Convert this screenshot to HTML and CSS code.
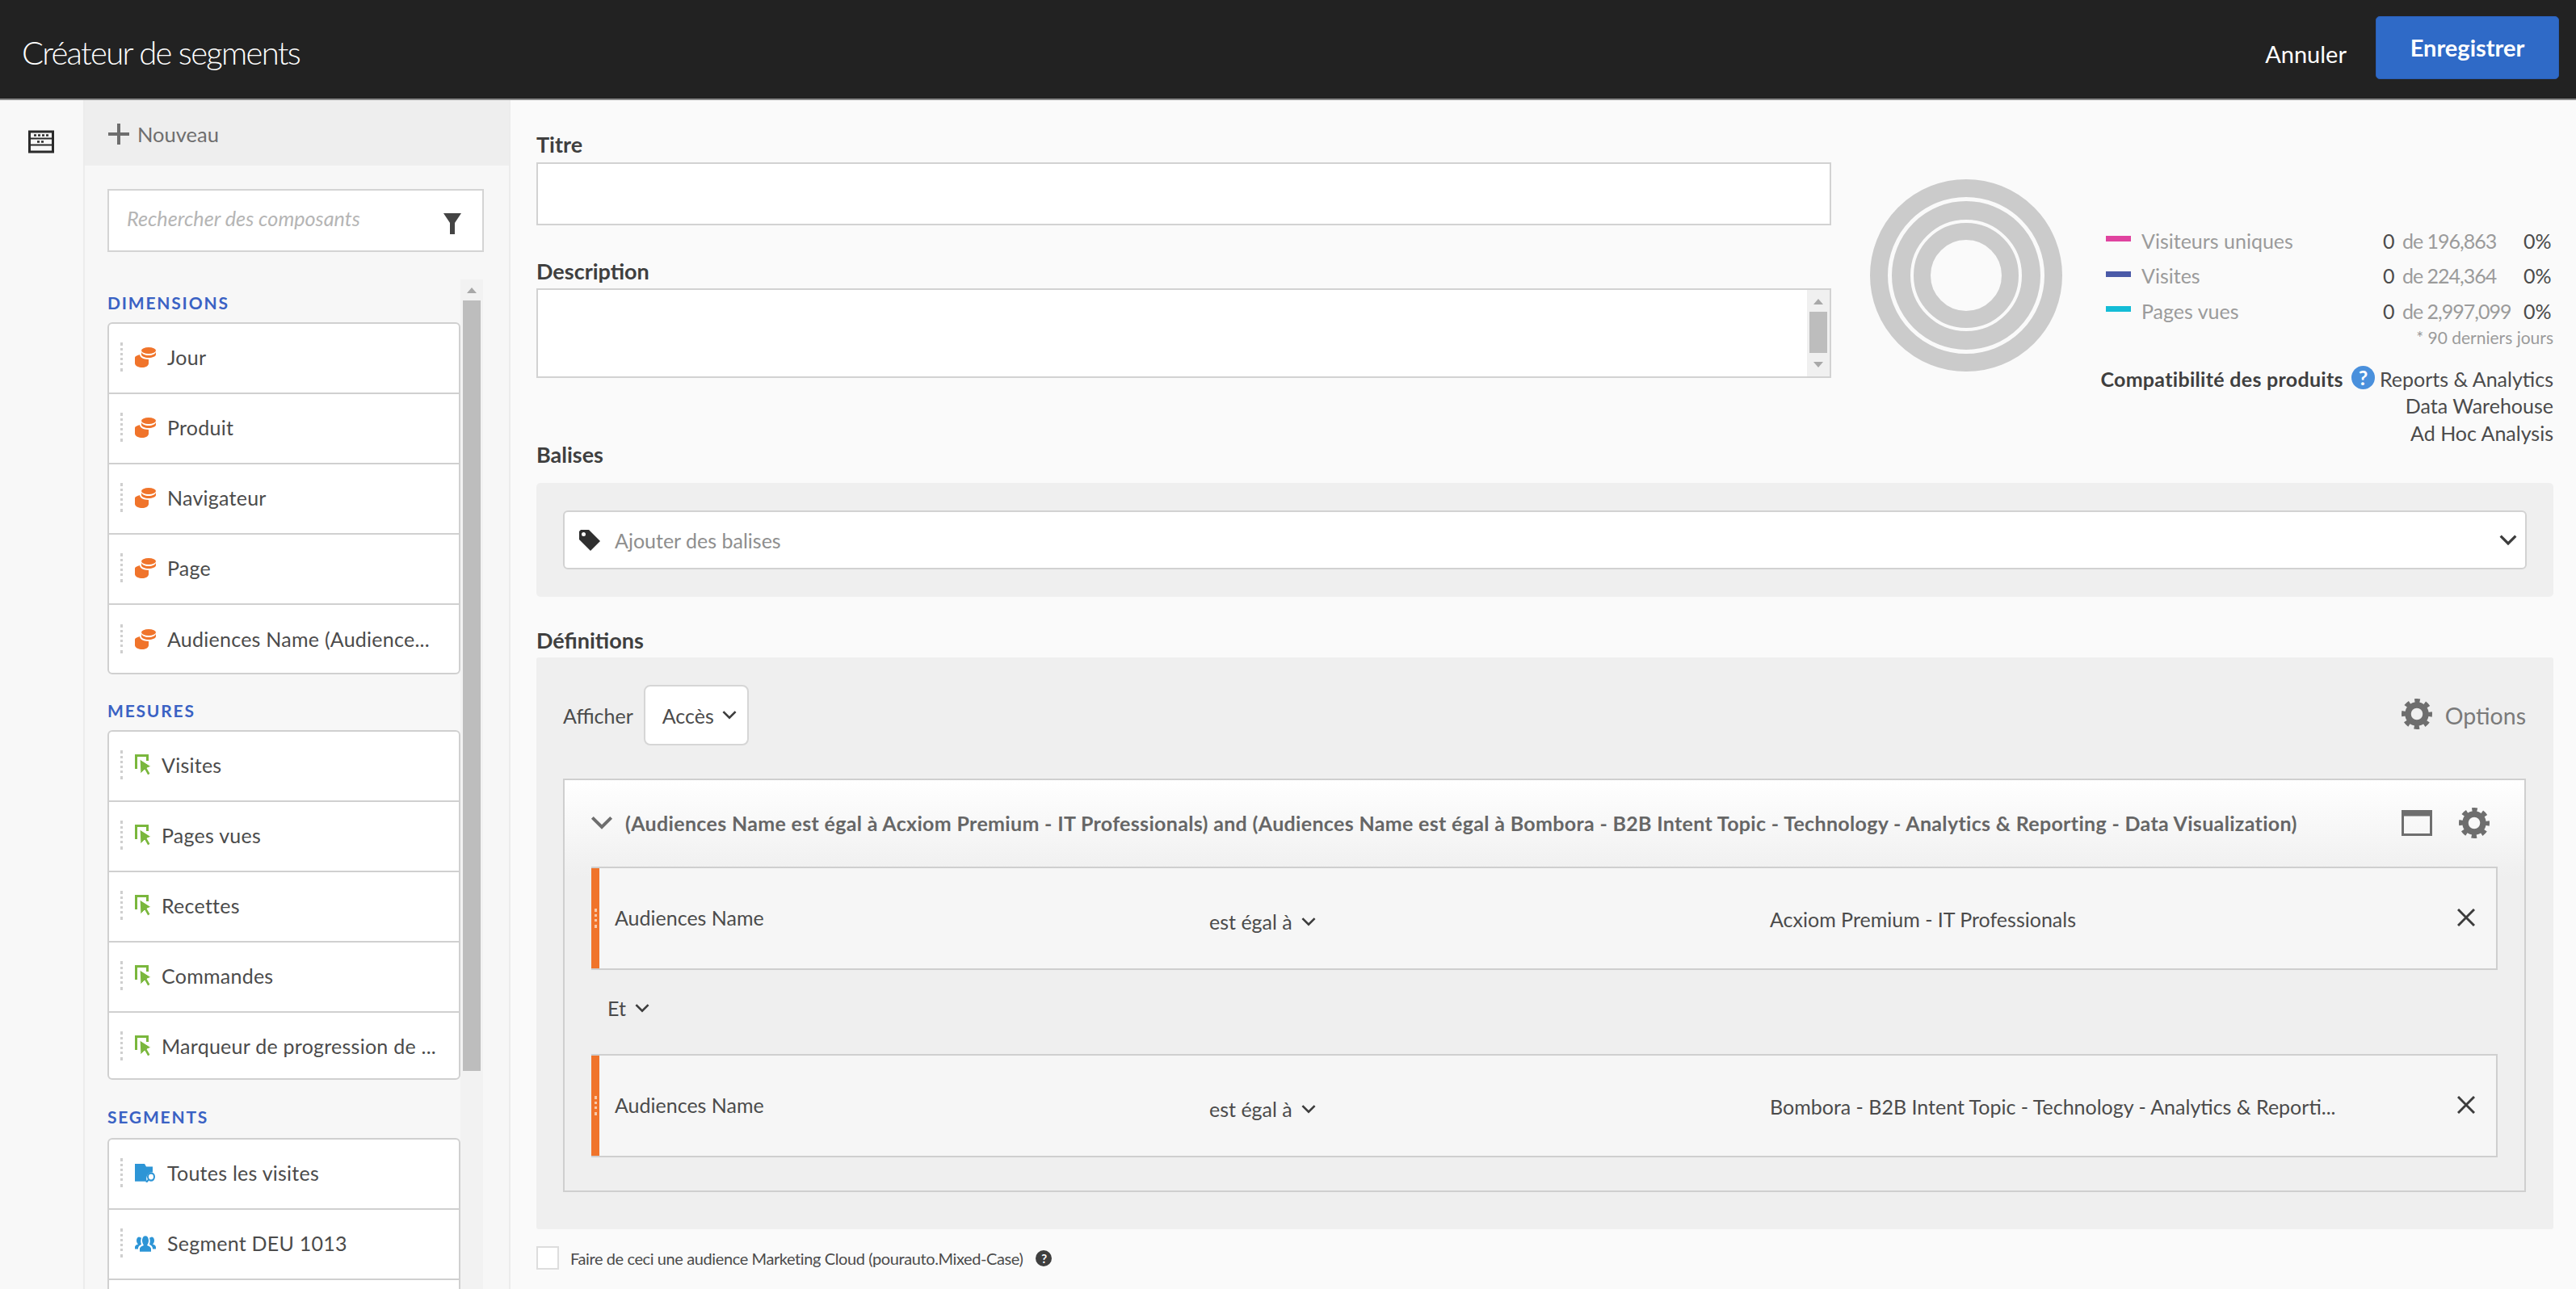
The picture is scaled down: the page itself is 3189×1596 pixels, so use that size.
FILE: index.html
```html
<!DOCTYPE html>
<html lang="fr">

<head>
    <meta charset="utf-8">
    <title>Créateur de segments</title>
    <link rel="stylesheet" href="styles.css">
</head>

<body>
    <svg class="defs" width="0" height="0">
        <symbol id="i-gear" viewBox="0 0 38 38">
            <circle cx="19" cy="19" r="11" fill="none" stroke="currentColor" stroke-width="7.500" />
            <circle cx="19" cy="19" r="16.500" fill="none" stroke="currentColor" stroke-width="5" stroke-dasharray="6.500 6.460" stroke-dashoffset="3.250" />
        </symbol>
        <symbol id="i-chevron" viewBox="0 0 18 12">
            <path d="M2 2l7 7 7-7" fill="none" stroke="currentColor" stroke-width="2.400" />
        </symbol>
        <symbol id="i-dim" viewBox="0 0 26 26">
            <ellipse cx="17" cy="5" rx="9" ry="4" fill="#f0742b" />
            <path d="M8 7v3c0 2 4 4 9 4s9-2 9-4V7c-1 2-4 4-9 4s-8-2-9-4z" fill="#f0742b" />
            <path d="M0 14c0-2 3-3 6-4 0 3 4 6 11 6v5c0 3-4 5-8 5s-9-2-9-5z" fill="#f0742b" />
        </symbol>
        <symbol id="i-metric" viewBox="0 0 20 26">
            <path d="M1.500 18V1.500h14V8" fill="none" stroke="#7ab73d" stroke-width="3" />
            <path d="M6 6l14 9-5 2 4 7-3 2-4-7-5 5z" fill="#7ab73d" stroke="#fff" stroke-width="1" />
        </symbol>
        <symbol id="i-folder" viewBox="0 0 26 20" preserveAspectRatio="none">
            <path d="M0 0h12l2 3h8v6a7 7 0 0 0-7 10H0z" fill="#2d95d6" />
            <circle cx="20" cy="14" r="4" fill="none" stroke="#2d95d6" stroke-width="2" />
            <path d="M17 17l-3 3" stroke="#2d95d6" stroke-width="2" />
        </symbol>
        <symbol id="i-people" viewBox="0 0 26 20" preserveAspectRatio="none">
            <path d="M13 2c3 0 4 3 4 5s-1 4-2 5c2 1 5 2 5 4v3H6v-3c0-2 3-3 5-4-1-1-2-3-2-5s1-5 4-5z" fill="#2d95d6" />
            <path d="M5 3c1 0 2 1 3 1-1 3-1 5 0 7-2 1-4 2-4 5H0v-2c0-2 3-3 4-3-1-1-2-2-2-4s1-4 3-4zM21 3c2 0 3 2 3 4s-1 3-2 4c1 0 4 1 4 3v2h-4c0-3-2-4-4-5 1-2 1-4 0-7 1 0 2-1 3-1z" fill="#2d95d6" />
        </symbol>
    </svg>

    <header class="topbar">
        <div class="app-title">Créateur de segments</div>
        <div class="top-actions">
            <span class="cancel">Annuler</span>
            <button class="save">Enregistrer</button>
        </div>
    </header>

    <div class="workspace">
        <nav class="rail">
            <svg class="rail_icon" viewBox="0 0 32 28">
                <rect x="1.500" y="1.500" width="29" height="25" fill="none" stroke="#2b2b2b" stroke-width="3" />
                <path d="M2 10h28M2 18h28" stroke="#2b2b2b" stroke-width="2" />
                <path d="M7 6h18M11 14h10" stroke="#2b2b2b" stroke-width="2.500" stroke-dasharray="3 2" />
            </svg>
        </nav>

        <aside class="panel">
            <div class="new_bar">
                <svg class="plus" viewBox="0 0 26 26">
                    <path d="M13 0v26M0 13h26" stroke="#6e6e6e" stroke-width="4" />
                </svg>
                <span>Nouveau</span>
            </div>
            <div class="search">
                <span class="search_hint">Rechercher des composants</span>
                <svg class="funnel" viewBox="0 0 22 26">
                    <path d="M0 0h22l-8 12v14H8V12z" fill="#444" />
                </svg>
            </div>
            <div class="components">
                <div class="comp_list">
                    <h3 class="comp_head first">DIMENSIONS</h3>
                    <ul class="comp_box">
                        <li class="comp_row"><i class="grip"></i><svg class="comp_icon"><use href="#i-dim" /></svg><span>Jour</span></li>
                        <li class="comp_row"><i class="grip"></i><svg class="comp_icon"><use href="#i-dim" /></svg><span>Produit</span></li>
                        <li class="comp_row"><i class="grip"></i><svg class="comp_icon"><use href="#i-dim" /></svg><span>Navigateur</span></li>
                        <li class="comp_row"><i class="grip"></i><svg class="comp_icon"><use href="#i-dim" /></svg><span>Page</span></li>
                        <li class="comp_row"><i class="grip"></i><svg class="comp_icon"><use href="#i-dim" /></svg><span>Audiences Name (Audience...</span></li>
                    </ul>
                    <h3 class="comp_head">MESURES</h3>
                    <ul class="comp_box">
                        <li class="comp_row metric"><i class="grip"></i><svg class="comp_icon"><use href="#i-metric" /></svg><span>Visites</span></li>
                        <li class="comp_row metric"><i class="grip"></i><svg class="comp_icon"><use href="#i-metric" /></svg><span>Pages vues</span></li>
                        <li class="comp_row metric"><i class="grip"></i><svg class="comp_icon"><use href="#i-metric" /></svg><span>Recettes</span></li>
                        <li class="comp_row metric"><i class="grip"></i><svg class="comp_icon"><use href="#i-metric" /></svg><span>Commandes</span></li>
                        <li class="comp_row metric"><i class="grip"></i><svg class="comp_icon"><use href="#i-metric" /></svg><span>Marqueur de progression de ...</span></li>
                    </ul>
                    <h3 class="comp_head seg_head">SEGMENTS</h3>
                    <ul class="comp_box">
                        <li class="comp_row"><i class="grip"></i><svg class="comp_icon seg_icon"><use href="#i-folder" /></svg><span>Toutes les visites</span></li>
                        <li class="comp_row"><i class="grip"></i><svg class="comp_icon seg_icon"><use href="#i-people" /></svg><span>Segment DEU 1013</span></li>
                        <li class="comp_row"></li>
                    </ul>
                </div>
                <div class="comp_scroll">
                    <i class="arrow_up"></i>
                    <div class="comp_thumb"></div>
                </div>
            </div>
        </aside>

        <main class="main">
            <section class="intro">
                <div class="form">
                    <label class="field_label">Titre</label>
                    <input class="title_input" type="text">
                    <label class="field_label desc_label">Description</label>
                    <div class="desc_box">
                        <div class="desc_scroll">
                            <i class="arrow_up"></i>
                            <div class="desc_thumb"></div>
                            <i class="arrow_down"></i>
                        </div>
                    </div>
                </div>
                <svg class="donut" viewBox="0 0 238 238">
                    <circle cx="119" cy="119" r="108" fill="none" stroke="#cbcbcb" stroke-width="22" />
                    <circle cx="119" cy="119" r="80.500" fill="none" stroke="#cbcbcb" stroke-width="23" />
                    <circle cx="119" cy="119" r="54.500" fill="none" stroke="#cbcbcb" stroke-width="21" />
                </svg>
                <div class="stats">
                    <div class="legend_row"><i class="swatch pink"></i><span class="legend_name">Visiteurs uniques</span><span class="legend_zero">0</span><span class="legend_of">de 196,863</span><span class="legend_pct">0%</span></div>
                    <div class="legend_row"><i class="swatch navy"></i><span class="legend_name">Visites</span><span class="legend_zero">0</span><span class="legend_of">de 224,364</span><span class="legend_pct">0%</span></div>
                    <div class="legend_row"><i class="swatch cyan"></i><span class="legend_name">Pages vues</span><span class="legend_zero">0</span><span class="legend_of">de 2,997,099</span><span class="legend_pct">0%</span></div>
                    <div class="note">* 90 derniers jours</div>
                    <div class="compat">
                        <strong class="compat_label">Compatibilité des produits</strong>
                        <span class="compat_help">?</span>
                        <div class="compat_list">
                            <div>Reports &amp; Analytics</div>
                            <div>Data Warehouse</div>
                            <div>Ad Hoc Analysis</div>
                        </div>
                    </div>
                </div>
            </section>

            <label class="field_label tags_label">Balises</label>
            <section class="tags_panel">
                <div class="tags_select">
                    <svg class="tag_icon" viewBox="0 0 26 26">
                        <path d="M0 2l2-2h10l14 14-12 12L0 12z" fill="#2f2f2f" />
                        <circle cx="5.500" cy="5.500" r="2.500" fill="#fff" />
                    </svg>
                    <span class="tags_hint">Ajouter des balises</span>
                    <svg class="chev tags_chev"><use href="#i-chevron" /></svg>
                </div>
            </section>

            <label class="field_label defs_label">Définitions</label>
            <section class="defs_panel">
                <div class="defs_toolbar">
                    <span class="show_label">Afficher</span>
                    <div class="show_select">
                        <span>Accès</span>
                        <svg class="chev"><use href="#i-chevron" /></svg>
                    </div>
                    <div class="options">
                        <svg class="gear"><use href="#i-gear" /></svg>
                        <span>Options</span>
                    </div>
                </div>
                <div class="group">
                    <div class="group_head">
                        <svg class="group_chev"><use href="#i-chevron" /></svg>
                        <span class="group_text">(Audiences Name est égal à Acxiom Premium - IT Professionals) and (Audiences Name est égal à Bombora - B2B Intent Topic - Technology - Analytics &amp; Reporting - Data Visualization)</span>
                        <svg class="window_icon" viewBox="0 0 38 32">
                            <rect x="1.500" y="1.500" width="35" height="29" fill="none" stroke="#6e6e6e" stroke-width="3" />
                            <path d="M2 4.500h34" stroke="#6e6e6e" stroke-width="6" />
                        </svg>
                        <svg class="gear"><use href="#i-gear" /></svg>
                    </div>
                    <div class="cond">
                        <div class="cond_bar"><i class="cond_dots"></i></div>
                        <span class="cond_name">Audiences Name</span>
                        <span class="cond_op">est égal à <svg class="chev"><use href="#i-chevron" /></svg></span>
                        <span class="cond_value">Acxiom Premium - IT Professionals</span>
                        <svg class="cond_x" viewBox="0 0 22 22"><path d="M1 1l20 20M21 1L1 21" stroke="#3c3c3c" stroke-width="3" /></svg>
                    </div>
                    <div class="and_row">
                        <span>Et</span>
                        <svg class="chev"><use href="#i-chevron" /></svg>
                    </div>
                    <div class="cond">
                        <div class="cond_bar"><i class="cond_dots"></i></div>
                        <span class="cond_name">Audiences Name</span>
                        <span class="cond_op">est égal à <svg class="chev"><use href="#i-chevron" /></svg></span>
                        <span class="cond_value">Bombora - B2B Intent Topic - Technology - Analytics &amp; Reporti...</span>
                        <svg class="cond_x" viewBox="0 0 22 22"><path d="M1 1l20 20M21 1L1 21" stroke="#3c3c3c" stroke-width="3" /></svg>
                    </div>
                </div>
            </section>

            <div class="audience_row">
                <i class="checkbox"></i>
                <span>Faire de ceci une audience Marketing Cloud (pourauto.Mixed-Case)</span>
                <span class="audience_help">?</span>
            </div>
        </main>
    </div>
</body>

</html>
```
FILE: styles.css
```css
* {
    box-sizing: border-box;
}

html,
body {
    margin: 0;
    height: 1596px;
    overflow: hidden;
}

body {
    font-family: "Lato", "Open Sans", sans-serif;
    font-size: 25px;
    color: #4b4b4b;
    background-color: #fafafa;
}

ul {
    list-style: none;
    margin: 0;
    padding: 0;
}

.defs {
    position: absolute;
}

.topbar {
    display: flex;
    justify-content: space-between;
    align-items: center;
    height: 124px;
    padding: 0 21px 4px 27px;
    background-color: #222;
    border-bottom: 2px solid #8a8a8a;
}

.app-title {
    margin-top: 12px;
    font-size: 40px;
    font-weight: 300;
    letter-spacing: -1.700px;
    color: #fff;
}

.top-actions {
    display: flex;
    align-items: center;
}

.cancel {
    margin: 14px 36px 0 0;
    font-size: 29px;
    color: #fff;
}

.save {
    width: 227px;
    height: 78px;
    padding: 0 0 2px;
    border: 1px solid #2a5fb8;
    border-radius: 5px;
    background-color: #2f6ac7;
    font: 700 29px "Lato", sans-serif;
    color: #fff;
}

.workspace {
    display: flex;
    height: 1472px;
    overflow: hidden;
}

.rail {
    flex: none;
    width: 105px;
    padding: 37px 0 0 35px;
    background-color: #f8f8f8;
    border-right: 2px solid #ececec;
}

.rail_icon {
    display: block;
    width: 32px;
    height: 29px;
}

.panel {
    flex: none;
    width: 527px;
    background-color: #f7f7f7;
    border-right: 2px solid #ececec;
}

.new_bar {
    display: flex;
    align-items: center;
    height: 81px;
    padding: 2px 0 0 29px;
    background-color: #eee;
    font-size: 25.500px;
    color: #6e6e6e;
}

.plus {
    width: 26px;
    height: 26px;
    margin-right: 10px;
}

.search {
    display: flex;
    justify-content: space-between;
    align-items: center;
    width: 466px;
    height: 78px;
    margin: 29px 0 0 28px;
    padding: 0 26px 0 22px;
    background-color: #fff;
    border: 2px solid #d4d4d4;
}

.search_hint {
    margin-bottom: 6px;
    font-size: 25.200px;
    font-style: italic;
    color: #b5b5b5;
}

.funnel {
    width: 22px;
    height: 26px;
    margin-top: 7px;
}

.components {
    display: flex;
    height: 1250px;
    margin: 34px 0 0 28px;
    overflow: hidden;
}

.comp_list {
    width: 437px;
}

.comp_head {
    margin: 29px 0 8px;
    font-size: 21px;
    line-height: 32px;
    font-weight: 700;
    letter-spacing: 1.800px;
    color: #3a62c4;
}

.comp_head.first {
    margin-top: 13px;
}

.comp_head.seg_head {
    margin: 30px 0 10px;
}

.comp_box {
    background-color: #fff;
    border: 2px solid #d0d0d0;
    border-radius: 6px;
}

.comp_row {
    display: flex;
    align-items: center;
    height: 87px;
    padding: 0 0 3px 14px;
    border-bottom: 2px solid #d0d0d0;
    letter-spacing: 0.250px;
    color: #4b4b4b;
}

.comp_row:last-child {
    height: 84px;
    padding-bottom: 0;
    border-bottom: 0;
}

.comp_row.metric:last-child {
    height: 81px;
}

.grip {
    width: 3px;
    height: 36px;
    margin-right: 15px;
    border-left: 3px dotted #cfcfcf;
}

.comp_icon {
    flex: none;
    width: 26px;
    height: 26px;
    margin-right: 14px;
}

.metric .comp_icon {
    width: 20px;
    height: 26px;
    margin-right: 13px;
}

.comp_icon.seg_icon {
    height: 23px;
}

.comp_scroll {
    flex: none;
    width: 28px;
    padding: 0 3px;
    background-color: #f2f2f2;
}

.arrow_up,
.arrow_down {
    display: block;
    width: 0;
    height: 0;
    margin: 10px auto;
    border-left: 6px solid transparent;
    border-right: 6px solid transparent;
}

.arrow_up {
    border-bottom: 7px solid #a8a8a8;
}

.arrow_down {
    border-top: 7px solid #a8a8a8;
}

.comp_thumb {
    height: 954px;
    margin-top: -1px;
    background-color: #bdbdbd;
}

.main {
    flex: 1;
    padding: 40px 28px 0 32px;
}

.intro {
    display: flex;
    height: 384px;
}

.form {
    flex: none;
    width: 1603px;
}

.field_label {
    display: block;
    height: 30px;
    font-size: 27px;
    line-height: 30px;
    font-weight: 700;
    color: #3f3f3f;
}

.title_input {
    display: block;
    width: 100%;
    height: 78px;
    margin-top: 7px;
    background-color: #fff;
    border: 2px solid #d2d2d2;
}

.desc_label {
    margin-top: 42px;
}

.desc_box {
    display: flex;
    justify-content: flex-end;
    height: 111px;
    margin-top: 6px;
    background-color: #fff;
    border: 2px solid #d2d2d2;
}

.desc_scroll {
    width: 28px;
    padding: 0 3px;
    background-color: #f0f0f0;
}

.desc_thumb {
    height: 51px;
    margin-top: -2px;
    background-color: #bdbdbd;
}

.desc_scroll .arrow_up,
.desc_scroll .arrow_down {
    margin: 11px auto;
}

.donut {
    flex: none;
    width: 238px;
    height: 238px;
    margin: 58px 0 0 48px;
}

.stats {
    flex: 1;
    margin: 112px 0 0 47px;
}

.legend_row {
    display: grid;
    grid-template-columns: 31px 312px 24px 150px auto;
    align-items: center;
    height: 43.500px;
    padding-left: 7px;
    font-size: 25px;
}

.swatch {
    width: 31px;
    height: 7px;
    margin-top: -4px;
}

.pink {
    background-color: #e0439f;
}

.navy {
    background-color: #4a5aa8;
}

.cyan {
    background-color: #13bcd6;
}

.legend_name {
    padding-left: 13px;
    color: #9b9b9b;
}

.legend_zero,
.legend_pct {
    color: #4b4b4b;
}

.legend_of {
    letter-spacing: -1px;
    color: #9b9b9b;
}

.note {
    margin-top: -2px;
    font-size: 21px;
    text-align: right;
    color: #9b9b9b;
}

.compat {
    display: flex;
    justify-content: flex-end;
    margin-top: 23px;
    font-size: 25px;
    line-height: 33.500px;
}

.compat_label {
    margin-right: 10px;
    letter-spacing: 0.300px;
    color: #3f3f3f;
}

.compat_help {
    flex: none;
    width: 29px;
    height: 29px;
    margin-right: 6px;
    border-radius: 50%;
    background-color: #4a90dc;
    font-weight: 700;
    line-height: 29px;
    text-align: center;
    color: #fff;
}

.compat_list {
    text-align: right;
}

.tags_panel {
    height: 141px;
    margin-top: 20px;
    padding: 34px 33px;
    background-color: #efefef;
    border-radius: 5px;
}

.tags_select {
    display: flex;
    align-items: center;
    height: 73px;
    padding: 0 9px 0 18px;
    background-color: #fff;
    border: 2px solid #d2d2d2;
    border-radius: 6px;
}

.tag_icon {
    flex: none;
    width: 26px;
    height: 26px;
    margin-right: 18px;
}

.tags_hint {
    flex: 1;
    color: #8e8e8e;
}

.chev {
    flex: none;
    width: 20px;
    height: 13px;
    color: #3c3c3c;
}

.tags_chev {
    width: 24px;
    height: 16px;
}

.defs_label {
    margin-top: 39px;
}

.defs_panel {
    height: 708px;
    margin-top: 6px;
    padding: 34px 34px 0 33px;
    background-color: #efefef;
    border-radius: 3px;
}

.defs_toolbar {
    display: flex;
    align-items: center;
    height: 75px;
}

.show_label {
    margin-right: 13px;
}

.show_select {
    display: flex;
    align-items: center;
    justify-content: space-between;
    width: 130px;
    height: 75px;
    padding: 0 12px 0 21px;
    background-color: #fff;
    border: 2px solid #d6d6d6;
    border-radius: 8px;
}

.options {
    display: flex;
    align-items: center;
    margin-left: auto;
    font-size: 28.500px;
    color: #7a7a7a;
}

.gear {
    flex: none;
    width: 38px;
    height: 38px;
    color: #6e6e6e;
}

.options .gear {
    margin: -4px 16px 0 0;
}

.group {
    height: 512px;
    margin-top: 41px;
    padding: 0 33px;
    background: linear-gradient(#fff, #efefef 120px);
    border: 2px solid #cfcfcf;
}

.group_head {
    display: flex;
    align-items: center;
    height: 107px;
    padding: 0 10px 2px 0;
}

.group_chev {
    flex: none;
    width: 30px;
    height: 20px;
    margin: 0 14px 0 -2px;
    color: #6e6e6e;
}

.group_text {
    flex: 1;
    font-weight: 700;
    font-size: 25px;
    letter-spacing: 0.330px;
    white-space: nowrap;
    color: #666;
}

.window_icon {
    flex: none;
    width: 38px;
    height: 32px;
    margin-right: 33px;
}

.cond {
    display: grid;
    grid-template-columns: 10px 755px 694px 1fr auto;
    align-items: center;
    height: 128px;
    padding-right: 26px;
    background-color: #f6f6f6;
    border: 2px solid #cfcfcf;
    border-left-width: 0;
}

.cond_bar {
    align-self: stretch;
    display: flex;
    align-items: center;
    justify-content: center;
    background-color: #f0742b;
}

.cond_dots {
    height: 24px;
    border-left: 3px dotted #f9c9a8;
}

.cond_name {
    padding: 0 0 3px 19px;
}

.cond_op {
    display: flex;
    align-items: center;
    gap: 10px;
    padding-top: 8px;
}

.cond_value {
    padding-top: 2px;
    white-space: nowrap;
}

.cond_x {
    width: 22px;
    height: 22px;
    margin-bottom: 3px;
}

.and_row {
    display: flex;
    align-items: center;
    gap: 10px;
    height: 104px;
    padding: 0 0 10px 20px;
}

.audience_row {
    display: flex;
    align-items: center;
    margin-top: 21px;
    font-size: 20px;
    letter-spacing: -0.400px;
}

.checkbox {
    flex: none;
    width: 28px;
    height: 29px;
    margin-right: 14px;
    background-color: #fff;
    border: 2px solid #ddd;
}

.audience_help {
    flex: none;
    width: 20px;
    height: 20px;
    margin-left: 16px;
    border-radius: 50%;
    background-color: #3f3f3f;
    font-size: 15px;
    font-weight: 700;
    line-height: 20px;
    text-align: center;
    color: #fff;
}
```
